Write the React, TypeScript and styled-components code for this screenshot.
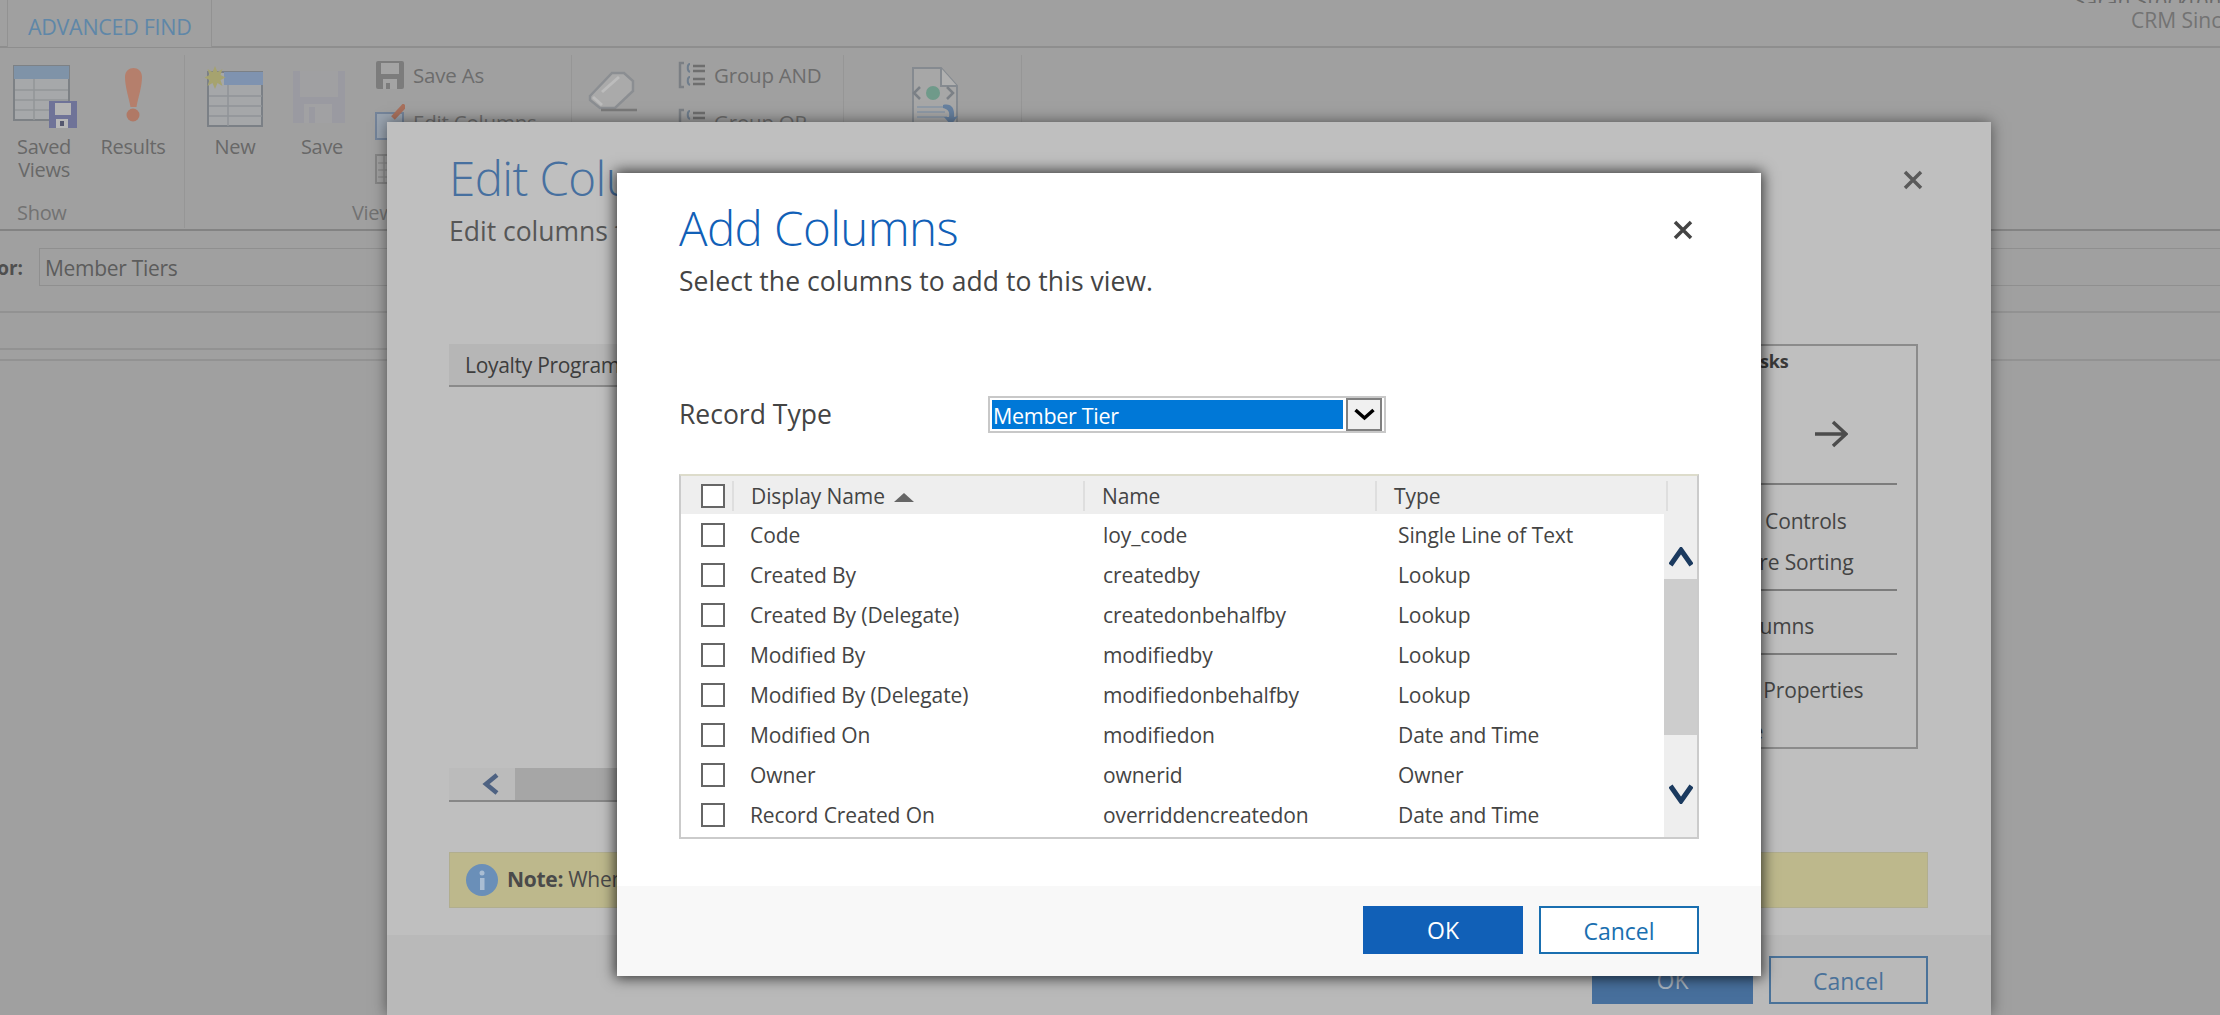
import React from "react";
import styled, { createGlobalStyle } from "styled-components";

const FONT = `"Open Sans", "Noto Sans", sans-serif`;

const GlobalStyle = createGlobalStyle`
  html, body {
    margin: 0;
    padding: 0;
    background: #a0a0a0;
    overflow: hidden;
  }
  body {
    font-family: ${FONT};
  }
`;

const ROWS = [
  ["Code", "loy_code", "Single Line of Text"],
  ["Created By", "createdby", "Lookup"],
  ["Created By (Delegate)", "createdonbehalfby", "Lookup"],
  ["Modified By", "modifiedby", "Lookup"],
  ["Modified By (Delegate)", "modifiedonbehalfby", "Lookup"],
  ["Modified On", "modifiedon", "Date and Time"],
  ["Owner", "ownerid", "Owner"],
  ["Record Created On", "overriddencreatedon", "Date and Time"]
];

/* ribbon icons: the viewBox is the page area they sit on, so coordinates read straight off the screenshot */
const SavedViewsIcon = () => (
  <svg width="72" height="72" viewBox="8 60 72 72">
    <rect x="14" y="66" width="55" height="54" fill="#a6a8aa" stroke="#7d8185" strokeWidth="2" />
    <rect x="14" y="66" width="55" height="13" fill="#7f93a8" />
    <path d="M34 79v41M15 90h53M15 100h53M15 110h53" stroke="#929598" strokeWidth="1.5" />
    <rect x="49" y="101" width="28" height="27" fill="#6f7398" />
    <rect x="55" y="103" width="16" height="12" fill="#b4b4b4" />
    <rect x="56" y="119" width="12" height="9" fill="#b8b8b8" />
    <rect x="60" y="121" width="4" height="5" fill="#55586f" />
  </svg>
);

const ResultsIcon = () => (
  <svg width="72" height="72" viewBox="97 60 72 72">
    <path d="M125 77c0-12 17-12 17 0 0 10-4 21-5.500 30h-6C129 98 125 87 125 77z" fill="#b57f6c" />
    <circle cx="133" cy="115" r="6.500" fill="#b07966" />
  </svg>
);

const NewIcon = () => (
  <svg width="72" height="72" viewBox="199 60 72 72">
    <rect x="208" y="72" width="54" height="54" fill="#a5a7a9" stroke="#7b8086" strokeWidth="2" />
    <rect x="224" y="72" width="39" height="13" fill="#7f93b0" />
    <path d="M228 85v41M209 96h53M209 106h53M209 116h53" stroke="#909498" strokeWidth="1.500" />
    <path
      d="M215 66l2.500 6 5-3-2 6 5 2.500-5 2.500 2 6-5-3-2.500 6-2.500-6-5 3 2-6-5-2.500 5-2.500-2-6 5 3z"
      fill="#a6a36f"
    />
  </svg>
);

const SaveIcon = () => (
  <svg width="72" height="72" viewBox="286 60 72 72">
    <path d="M293 71h52v52h-52z" fill="#9a9aa1" />
    <rect x="300" y="71" width="38" height="26" fill="#a0a0a2" />
    <rect x="304" y="104" width="28" height="19" fill="#a1a1a3" />
    <rect x="309" y="107" width="6" height="16" fill="#9a9aa1" />
  </svg>
);

const SmallSave = () => (
  <svg width="30" height="30" viewBox="0 0 30 30">
    <rect x="1" y="1" width="28" height="28" rx="2" fill="#7c7c7c" />
    <rect x="6" y="3" width="18" height="11" fill="#a4a4a4" />
    <rect x="8" y="19" width="14" height="10" fill="#a4a4a4" />
    <rect x="11" y="23" width="4" height="6" fill="#7c7c7c" />
  </svg>
);

const SmallEdit = () => (
  <svg width="30" height="36" viewBox="0 0 30 36">
    <rect x="1" y="9" width="27" height="26" fill="#9aa4b0" stroke="#74849a" strokeWidth="2" />
    <path d="M18 14L30 1" stroke="#a8705c" strokeWidth="5" />
  </svg>
);

const SmallList = () => (
  <svg width="30" height="30" viewBox="0 0 30 30">
    <rect x="1" y="1" width="26" height="28" fill="none" stroke="#848484" strokeWidth="2" />
    <path d="M9 2v26M3 9h22M3 16h22M3 23h22" stroke="#8a8a8a" strokeWidth="1.500" />
  </svg>
);

const EraserIcon = () => (
  <svg width="52" height="44" viewBox="0 0 52 44">
    <path d="M3 26L25 3h12l9 8v10L28 38H13L3 30z" fill="#aaaaaa" stroke="#8b8e92" strokeWidth="2.500" />
    <path d="M6 27l9 8M15 22L32 7" stroke="#bcbcbc" strokeWidth="3" />
    <path d="M14 40h36" stroke="#7a7a7a" strokeWidth="2.500" />
  </svg>
);

const GroupGlyph = () => (
  <svg width="28" height="30" viewBox="0 0 28 30">
    <path d="M6 3H2v24h4" fill="none" stroke="#7b7f84" strokeWidth="2.500" />
    <path d="M12 4c-3 0-3 7 0 8M12 17c-3 0-3 7 0 8" fill="none" stroke="#6f7d8c" strokeWidth="2" />
    <path d="M15 6h12M15 11h12M15 19h12M15 24h12" stroke="#6e6e6e" strokeWidth="2.500" />
  </svg>
);

const DocIcon = () => (
  <svg width="50" height="62" viewBox="0 0 50 62">
    <path d="M2 1h28l16 18v41H2z" fill="#a7a7a7" stroke="#858a90" strokeWidth="2" />
    <path d="M30 1v18h16" fill="#b0b0b0" stroke="#858a90" strokeWidth="2" />
    <circle cx="22" cy="26" r="7" fill="#6f9a8a" />
    <path d="M9 20l-6 6 6 6M36 20l6 6-6 6" fill="none" stroke="#7b8086" strokeWidth="2.500" />
    <path d="M6 40h30M6 45h28M6 50h30" stroke="#8f9aa6" strokeWidth="2" />
    <path d="M32 38c8-2 12 3 11 12l4-1-7 9-7-8 5 0c1-5-1-8-6-9z" fill="#66809f" />
  </svg>
);

const CloseIcon = ({ color }: { color: string }) => (
  <svg width="20" height="20" viewBox="0 0 20 20">
    <path d="M2 2l16 16M18 2L2 18" stroke={color} strokeWidth="3.500" />
  </svg>
);

const Chevron = ({ up, color, width, height, stroke }: { up?: boolean; color: string; width: number; height: number; stroke: number }) => (
  <svg width={width} height={height} viewBox={`0 0 ${width} ${height}`}>
    <path
      d={up ? `M1.500 ${height - 2}L${width / 2} 3L${width - 1.500} ${height - 2}` : `M1.500 2L${width / 2} ${height - 3}L${width - 1.500} 2`}
      fill="none"
      stroke={color}
      strokeWidth={stroke}
    />
  </svg>
);

const App = () => (
  <Page>
    <GlobalStyle />

    <TopBar>
      <Tab>ADVANCED FIND</Tab>
      <UserBlock>
        <UserLine>
          <UserGlyph />
          <span>Sarah Stockton</span>
        </UserLine>
        <OrgLine>CRM Since 2015</OrgLine>
      </UserBlock>
    </TopBar>

    <Ribbon>
      <RibbonGroup $width={185}>
        <ButtonRow>
          <RibbonButton $width={88}>
            <SavedViewsIcon />
            <RibbonLabel>
              Saved
              <br />
              Views
            </RibbonLabel>
          </RibbonButton>
          <RibbonButton $width={90}>
            <ResultsIcon />
            <RibbonLabel>Results</RibbonLabel>
          </RibbonButton>
        </ButtonRow>
        <GroupLabel $left={17}>Show</GroupLabel>
      </RibbonGroup>

      <RibbonGroup $width={387}>
        <ButtonRow>
          <RibbonButton $width={100}>
            <NewIcon />
            <RibbonLabel>New</RibbonLabel>
          </RibbonButton>
          <RibbonButton $width={74}>
            <SaveIcon />
            <RibbonLabel>Save</RibbonLabel>
          </RibbonButton>
          <SmallColumn $left={16}>
            <SmallRow>
              <SmallSave />
              Save As
            </SmallRow>
            <SmallRow>
              <SmallEdit />
              Edit Columns
            </SmallRow>
            <SmallRow>
              <SmallList />
              Edit Filter
            </SmallRow>
          </SmallColumn>
        </ButtonRow>
        <GroupLabel $left={167}>View</GroupLabel>
      </RibbonGroup>

      <RibbonGroup $width={272}>
        <ButtonRow>
          <EraserSlot>
            <EraserIcon />
          </EraserSlot>
          <SmallColumn $left={39}>
            <SmallRow>
              <GroupGlyph />
              Group AND
            </SmallRow>
            <SmallRow>
              <GroupGlyph />
              Group OR
            </SmallRow>
          </SmallColumn>
        </ButtonRow>
      </RibbonGroup>

      <RibbonGroup $width={178}>
        <DocSlot>
          <DocIcon />
        </DocSlot>
      </RibbonGroup>
    </Ribbon>

    <LookForRow>
      <LookForLabel>Look for:</LookForLabel>
      <LookForInput>Member Tiers</LookForInput>
    </LookForRow>
    <Strip $height={35} $width={2220} $top={23} />
    <Strip $height={9} $width={400} />
    <Strip $height={0} $width={2220} />

    <EditDialog>
      <EditHead>
        <EditHeadText>
          <EditTitle>Edit Columns</EditTitle>
          <EditSub>Edit columns for the view</EditSub>
        </EditHeadText>
        <EditClose>
          <CloseIcon color="#5a5a5a" />
        </EditClose>
      </EditHead>

      <EditBody>
        <EditLeft>
          <EntityTab>Loyalty Program</EntityTab>
          <HScroll>
            <HScrollButton>
              <svg width="18" height="22" viewBox="0 0 18 22">
                <path d="M15 2L4 11l11 9" fill="none" stroke="#4e6282" strokeWidth="4.500" />
              </svg>
            </HScrollButton>
          </HScroll>
        </EditLeft>
        <TaskBox>
          <TaskTitle>Common Tasks</TaskTitle>
          <TaskArrow>
            <svg width="34" height="28" viewBox="0 0 34 28">
              <path d="M1 14h30M19 2l13 12-13 12" fill="none" stroke="#4c4c4c" strokeWidth="3.500" />
            </svg>
          </TaskArrow>
          <TaskRule />
          <TaskLink $top={16}>Custom Controls</TaskLink>
          <TaskLink>Configure Sorting</TaskLink>
          <TaskRule $top={6} />
          <TaskLink $top={15}>Add Columns</TaskLink>
          <TaskRule $top={6} />
          <TaskLink $top={15}>Change Properties</TaskLink>
          <TaskLink>Remove</TaskLink>
        </TaskBox>
      </EditBody>

      <NoteBar>
        <svg width="32" height="32" viewBox="0 0 32 32">
          <circle cx="16" cy="16" r="16" fill="#6a8fb8" />
          <rect x="14" y="14" width="4.500" height="12" fill="#a9bdd3" />
          <circle cx="16" cy="9" r="2.500" fill="#a9bdd3" />
        </svg>
        <NoteText>
          <b>Note:</b> When you add columns to the view they are saved with it
        </NoteText>
      </NoteBar>

      <EditFooter>
        <EditOk>OK</EditOk>
        <EditCancel>Cancel</EditCancel>
      </EditFooter>
    </EditDialog>

    <AddDialog>
      <AddHead>
        <div>
          <AddTitle>Add Columns</AddTitle>
          <AddSub>Select the columns to add to this view.</AddSub>
        </div>
        <AddClose>
          <CloseIcon color="#444444" />
        </AddClose>
      </AddHead>

      <RecordRow>
        <RecordLabel>Record Type</RecordLabel>
        <SelectBox>
          <SelectValue>Member Tier</SelectValue>
          <SelectButton>
            <Chevron color="#000" width={21} height={13} stroke={3.5} />
          </SelectButton>
        </SelectBox>
      </RecordRow>

      <Grid>
        <GridHead>
          <HeadCheck>
            <Check />
          </HeadCheck>
          <HeadCell $width={351}>
            Display Name
            <SortMark />
          </HeadCell>
          <HeadCell $width={292}>Name</HeadCell>
          <HeadCell $width={291}>Type</HeadCell>
          <HeadEnd />
        </GridHead>
        <GridBody>
          <RowList>
            {ROWS.map(([display, name, type]) => (
              <Row key={name}>
                <RowCheck>
                  <Check />
                </RowCheck>
                <Cell $width={353}>{display}</Cell>
                <Cell $width={295}>{name}</Cell>
                <Cell $width={264}>{type}</Cell>
              </Row>
            ))}
          </RowList>
          <Scrollbar>
            <ScrollButton $height={65} $pad={33}>
              <Chevron up color="#1b3a5f" width={24} height={20} stroke={5} />
            </ScrollButton>
            <ScrollThumb />
            <ScrollButton $height={102} $pad={49}>
              <Chevron color="#1b3a5f" width={24} height={20} stroke={5} />
            </ScrollButton>
          </Scrollbar>
        </GridBody>
      </Grid>

      <AddFooter>
        <OkButton>OK</OkButton>
        <CancelButton>Cancel</CancelButton>
      </AddFooter>
    </AddDialog>
  </Page>
);

export default App;

const Page = styled.div`
  position: relative;
  width: 2220px;
  height: 1015px;
  overflow: hidden;
  background: #a0a0a0;
  color: #6a6a6a;
`;

const TopBar = styled.div`
  display: flex;
  height: 46px;
  border-bottom: 2px solid #8e8e8e;
`;

const Tab = styled.div`
  width: 205px;
  height: 47px;
  margin-left: 7px;
  padding-left: 20px;
  box-sizing: border-box;
  border: 1px solid #929292;
  border-top: 0;
  border-bottom: 0;
  background: #a0a0a0;
  font-size: 21.5px;
  line-height: 54px;
  letter-spacing: -0.3px;
  color: #5f87a8;
`;

const UserBlock = styled.div`
  margin-left: auto;
  width: 160px;
  overflow: hidden;
  white-space: nowrap;
`;

const UserLine = styled.div`
  display: flex;
  align-items: flex-end;
  gap: 14px;
  height: 3px;
  overflow: hidden;
  font-size: 21px;
  line-height: 3px;
  color: #6a6a6a;
`;

const UserGlyph = styled.span`
  display: block;
  width: 26px;
  height: 2px;
  background: #777;
`;

const OrgLine = styled.div`
  margin: 3px 0 0 71px;
  font-size: 21px;
  line-height: 28px;
  color: #737373;
`;

const Ribbon = styled.div`
  display: flex;
  height: 181px;
  border-bottom: 2px solid #838383;
`;

const RibbonGroup = styled.div<{ $width: number }>`
  display: flex;
  flex-direction: column;
  box-sizing: border-box;
  width: ${(p) => p.$width}px;
  height: 173px;
  margin-top: 7px;
  border-right: 1px solid #969696;
`;

const ButtonRow = styled.div`
  display: flex;
  flex: 1;
  min-height: 0;
`;

const RibbonButton = styled.div<{ $width: number }>`
  display: flex;
  flex-direction: column;
  align-items: center;
  width: ${(p) => p.$width}px;
  padding-top: 5px;
`;

const RibbonLabel = styled.div`
  margin-top: 3px;
  font-size: 20px;
  line-height: 23px;
  text-align: center;
  letter-spacing: -0.3px;
  color: #686868;
`;

const GroupLabel = styled.div<{ $left: number }>`
  padding: 0 0 4px ${(p) => p.$left}px;
  font-size: 20px;
  line-height: 23px;
  letter-spacing: -0.3px;
  color: #727272;
`;

const SmallColumn = styled.div<{ $left: number }>`
  display: flex;
  flex-direction: column;
  gap: 7px;
  margin-left: ${(p) => p.$left}px;
`;

const SmallRow = styled.div`
  display: flex;
  align-items: center;
  gap: 8px;
  height: 40px;
  font-size: 20.5px;
  letter-spacing: -0.2px;
  white-space: nowrap;
  color: #6c6c6c;
`;

const EraserSlot = styled.div`
  margin: 15px 0 0 15px;
  width: 52px;
`;

const DocSlot = styled.div`
  margin: 12px 0 0 67px;
`;

const LookForRow = styled.div`
  display: flex;
  align-items: center;
  height: 42px;
  margin-top: 15px;
`;

const LookForLabel = styled.div`
  display: flex;
  justify-content: flex-end;
  width: 23px;
  padding-top: 2px;
  overflow: hidden;
  white-space: nowrap;
  font-size: 19px;
  font-weight: 700;
  color: #4f4f4f;
`;

const LookForInput = styled.div`
  flex: 1;
  box-sizing: border-box;
  height: 38px;
  margin-left: 16px;
  padding-left: 5px;
  border: 1px solid #8f8f8f;
  border-right: 0;
  font-size: 21px;
  line-height: 38px;
  letter-spacing: -0.3px;
  color: #5c5c5c;
`;

const Strip = styled.div<{ $height: number; $width: number; $top?: number }>`
  width: ${(p) => p.$width}px;
  height: ${(p) => p.$height}px;
  margin-top: ${(p) => p.$top ?? 0}px;
  border-top: 2px solid #929292;
`;

/* Edit Columns dialog, behind the active one */
const EditDialog = styled.div`
  position: absolute;
  left: 387px;
  top: 122px;
  display: flex;
  flex-direction: column;
  width: 1604px;
  height: 893px;
  background: #bfbfbf;
  box-shadow: 0 0 14px rgba(0, 0, 0, 0.5);
`;

const EditHead = styled.div`
  display: flex;
  justify-content: space-between;
  height: 222px;
  padding: 26px 68px 0 62px;
  box-sizing: border-box;
`;

const EditHeadText = styled.div`
  width: 168px;
  overflow: hidden;
  white-space: nowrap;
`;

const EditTitle = styled.div`
  font-size: 47.5px;
  font-weight: 300;
  line-height: 60px;
  letter-spacing: -0.6px;
  color: #47709f;
`;

const EditSub = styled.div`
  margin-top: 6px;
  font-size: 26.5px;
  line-height: 34px;
  color: #565656;
`;

const EditClose = styled.div`
  margin-top: 22px;
  line-height: 0;
`;

const EditBody = styled.div`
  display: flex;
  gap: 20px;
  height: 458px;
  padding-left: 62px;
`;

const EditLeft = styled.div`
  display: flex;
  flex-direction: column;
  justify-content: space-between;
  width: 1201px;
`;

const EntityTab = styled.div`
  box-sizing: border-box;
  height: 43px;
  padding-left: 16px;
  background: #b6b6b6;
  border-bottom: 2px solid #8a8a8a;
  font-size: 21px;
  line-height: 43px;
  letter-spacing: -0.3px;
  color: #3d3d3d;
`;

const HScroll = styled.div`
  display: flex;
  box-sizing: border-box;
  height: 34px;
  background: #a6a6a6;
  border-bottom: 2px solid #878787;
`;

const HScrollButton = styled.div`
  display: flex;
  align-items: center;
  justify-content: center;
  width: 66px;
  padding-left: 18px;
  box-sizing: border-box;
  background: #bbbbbb;
`;

const TaskBox = styled.div`
  box-sizing: border-box;
  width: 248px;
  height: 405px;
  padding-left: 18px;
  overflow: hidden;
  border: 2px solid #8b8b8b;
`;

const TaskTitle = styled.div`
  margin-left: -35px;
  padding-top: 1px;
  font-size: 18px;
  font-weight: 700;
  line-height: 28px;
  letter-spacing: -0.2px;
  white-space: nowrap;
  color: #3a3a3a;
`;

const TaskArrow = styled.div`
  display: flex;
  align-items: center;
  justify-content: flex-end;
  height: 108px;
  padding: 10px 68px 0 0;
  box-sizing: border-box;
`;

const TaskRule = styled.div<{ $top?: number }>`
  height: 2px;
  margin: ${(p) => p.$top ?? 0}px 19px 0 0;
  background: #7c7c7c;
`;

const TaskLink = styled.div<{ $top?: number }>`
  margin: ${(p) => p.$top ?? 0}px 0 0 -5px;
  font-size: 21px;
  line-height: 41px;
  letter-spacing: -0.15px;
  white-space: nowrap;
  color: #444444;
`;

const NoteBar = styled.div`
  display: flex;
  align-items: center;
  gap: 9px;
  box-sizing: border-box;
  width: 1479px;
  height: 56px;
  margin: 50px 0 0 62px;
  padding-left: 16px;
  background: #bdb88c;
  border: 1px solid #b1ae8f;
`;

const NoteText = styled.div`
  margin-top: -2px;
  font-size: 21px;
  letter-spacing: -0.3px;
  white-space: nowrap;
  color: #4a4a4a;
`;

const EditFooter = styled.div`
  display: flex;
  flex: 1;
  justify-content: flex-end;
  gap: 16px;
  margin-top: 27px;
  padding: 21px 63px 0 0;
  background: #b9b9b9;
`;

const EditOk = styled.div`
  box-sizing: border-box;
  width: 161px;
  height: 48px;
  background: #476f9c;
  font-size: 23px;
  line-height: 48px;
  text-align: center;
  color: #a9b4c0;
`;

const EditCancel = styled.div`
  box-sizing: border-box;
  width: 159px;
  height: 48px;
  border: 2px solid #4a7299;
  font-size: 23px;
  line-height: 46px;
  text-align: center;
  color: #4a7299;
`;

/* Add Columns dialog */
const AddDialog = styled.div`
  position: absolute;
  left: 617px;
  top: 173px;
  display: flex;
  flex-direction: column;
  width: 1144px;
  height: 803px;
  background: #ffffff;
  box-shadow: 0 0 13px 2px rgba(0, 0, 0, 0.72);
`;

const AddHead = styled.div`
  display: flex;
  justify-content: space-between;
  height: 223px;
  padding: 25px 68px 0 62px;
  box-sizing: border-box;
`;

const AddTitle = styled.div`
  font-size: 47.5px;
  font-weight: 300;
  line-height: 60px;
  letter-spacing: -0.6px;
  color: #1160b7;
`;

const AddSub = styled.div`
  margin-top: 6px;
  font-size: 26.5px;
  line-height: 34px;
  letter-spacing: 0.05px;
  color: #444444;
`;

const AddClose = styled.div`
  margin-top: 22px;
  line-height: 0;
`;

const RecordRow = styled.div`
  display: flex;
  align-items: center;
  height: 37px;
  padding-left: 62px;
`;

const RecordLabel = styled.div`
  width: 309px;
  margin-top: -2px;
  font-size: 26.5px;
  color: #444444;
`;

const SelectBox = styled.div`
  display: flex;
  gap: 3px;
  box-sizing: border-box;
  width: 398px;
  height: 37px;
  padding: 2px;
  background: #ffffff;
  border: 2px solid #c8c8c8;
`;

const SelectValue = styled.div`
  width: 354px;
  height: 29px;
  padding-left: 1px;
  box-sizing: border-box;
  background: #0078d7;
  font-size: 21.5px;
  line-height: 32px;
  letter-spacing: -0.3px;
  color: #ffffff;
`;

const SelectButton = styled.div`
  display: flex;
  align-items: center;
  justify-content: center;
  box-sizing: border-box;
  width: 36px;
  height: 33px;
  margin: -2px 0 0 0;
  background: #f0f0f0;
  border: 2px solid #808080;
`;

const Grid = styled.div`
  box-sizing: border-box;
  width: 1020px;
  height: 365px;
  margin: 41px 0 0 62px;
  border: 2px solid #cbcbcb;
  border-top-color: #dddccb;
`;

const GridHead = styled.div`
  display: flex;
  align-items: center;
  height: 38px;
  margin-bottom: 1px;
  padding-top: 1px;
  box-sizing: border-box;
  font-size: 21px;
  letter-spacing: -0.1px;
  color: #444444;
  background: #eeeeee;
`;

const HeadCheck = styled.div`
  display: flex;
  align-items: center;
  box-sizing: border-box;
  width: 51px;
  padding-left: 20px;
`;

const HeadCell = styled.div<{ $width: number }>`
  display: flex;
  align-items: center;
  box-sizing: border-box;
  width: ${(p) => p.$width}px;
  height: 30px;
  padding-left: 17px;
  border-left: 2px solid #dedede;
`;

const HeadEnd = styled.div`
  flex: 1;
  height: 30px;
  border-left: 2px solid #dedede;
`;

const SortMark = styled.span`
  width: 0;
  height: 0;
  margin: 4px 0 0 9px;
  border-left: 10px solid transparent;
  border-right: 10px solid transparent;
  border-bottom: 9px solid #666666;
`;

const Check = styled.span`
  display: block;
  box-sizing: border-box;
  width: 24px;
  height: 24px;
  border: 2px solid #666666;
  background: #ffffff;
`;

const GridBody = styled.div`
  display: flex;
  height: 322px;
`;

const RowList = styled.div`
  width: 982px;
`;

const Row = styled.div`
  display: flex;
  align-items: center;
  height: 40px;
  font-size: 21px;
  letter-spacing: -0.1px;
  color: #444444;
`;

const RowCheck = styled.div`
  box-sizing: border-box;
  width: 69px;
  padding-left: 20px;
`;

const Cell = styled.div<{ $width: number }>`
  width: ${(p) => p.$width}px;
  white-space: nowrap;
`;

const Scrollbar = styled.div`
  display: flex;
  flex-direction: column;
  flex: 1;
  margin: -1px 0 0 1px;
`;

const ScrollButton = styled.div<{ $height: number; $pad: number }>`
  display: flex;
  justify-content: center;
  box-sizing: border-box;
  height: ${(p) => p.$height}px;
  padding-top: ${(p) => p.$pad}px;
  background: #eeeeee;
`;

const ScrollThumb = styled.div`
  height: 156px;
  background: #cdcdcd;
`;

const AddFooter = styled.div`
  display: flex;
  flex: 1;
  justify-content: flex-end;
  gap: 16px;
  margin-top: 47px;
  padding: 20px 62px 0 0;
  background: #f8f8f8;
`;

const OkButton = styled.div`
  width: 160px;
  height: 48px;
  background: #1160b7;
  font-size: 23px;
  line-height: 48px;
  text-align: center;
  color: #ffffff;
`;

const CancelButton = styled.div`
  box-sizing: border-box;
  width: 160px;
  height: 48px;
  background: #ffffff;
  border: 2px solid #1a6fb0;
  font-size: 23px;
  line-height: 46px;
  text-align: center;
  color: #1a6fb0;
`;
